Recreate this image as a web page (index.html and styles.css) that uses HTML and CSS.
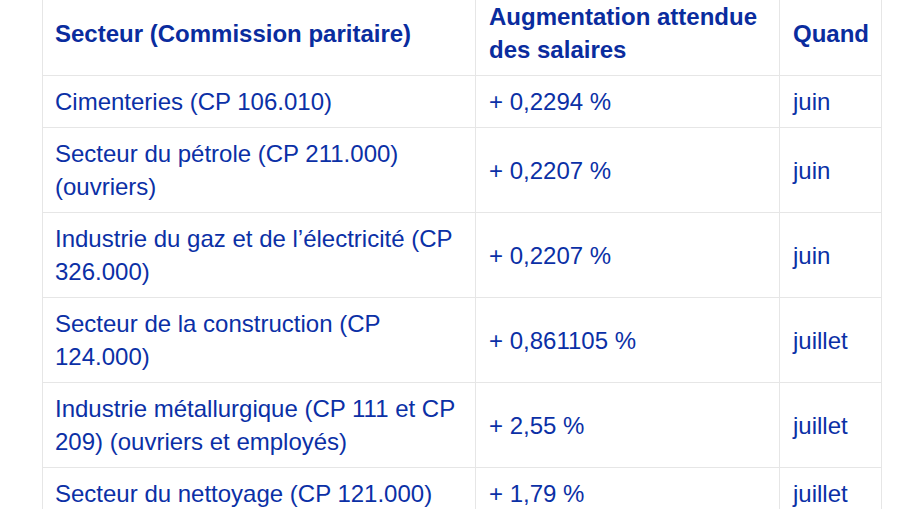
FILE: index.html
```html
<!DOCTYPE html>
<html lang="fr">
<head>
<meta charset="utf-8">
<link rel="stylesheet" href="styles.css">
</head>
<body>
<table class="wage-table">
  <colgroup>
    <col class="c1">
    <col class="c2">
    <col class="c3">
  </colgroup>
  <thead>
    <tr>
      <th>Secteur (Commission paritaire)</th>
      <th>Augmentation attendue des salaires</th>
      <th>Quand</th>
    </tr>
  </thead>
  <tbody>
    <tr><td>Cimenteries (CP 106.010)</td><td>+ 0,2294 %</td><td>juin</td></tr>
    <tr><td>Secteur du pétrole (CP 211.000) (ouvriers)</td><td>+ 0,2207 %</td><td>juin</td></tr>
    <tr><td>Industrie du gaz et de l’électricité (CP 326.000)</td><td>+ 0,2207 %</td><td>juin</td></tr>
    <tr><td>Secteur de la construction (CP 124.000)</td><td>+ 0,861105 %</td><td>juillet</td></tr>
    <tr><td>Industrie métallurgique (CP 111 et CP 209) (ouvriers et employés)</td><td>+ 2,55 %</td><td>juillet</td></tr>
    <tr><td>Secteur du nettoyage (CP 121.000)</td><td>+ 1,79 %</td><td>juillet</td></tr>
  </tbody>
</table>
</body>
</html>
```

FILE: styles.css
```css
html, body {
  margin: 0;
  padding: 0;
  background: #ffffff;
}
body {
  font-family: "Liberation Sans", Arial, sans-serif;
  color: #0b30a6;
  overflow: hidden;
}
.wage-table {
  margin: -10px 0 0 42px;
  width: 839px;
  border-collapse: collapse;
  table-layout: fixed;
  font-size: 24px;
  line-height: 33px;
}
.c1 { width: 433px; }
.c2 { width: 304px; }
.c3 { width: 102px; }
.wage-table th,
.wage-table td {
  border: 1px solid #e6e6e6;
  padding: 9px 12px 9px 12px;
  text-align: left;
  vertical-align: middle;
}
.wage-table th + th,
.wage-table td + td {
  padding-left: 13px;
}
.wage-table th {
  font-weight: bold;
  color: #0a2c9e;
}
```
